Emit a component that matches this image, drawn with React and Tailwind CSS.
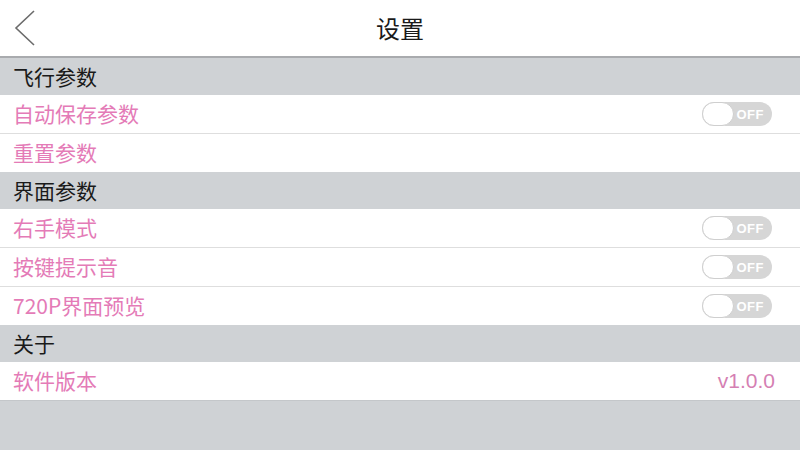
import React from "react";

const font = { fontFamily: '"Noto Sans CJK SC", "Noto Sans", sans-serif' };

function Toggle() {
  return (
    <div className="relative w-[70px] h-[24px] rounded-full bg-[#d6d6d6] flex items-center justify-end pr-[8px]">
      <span className="text-white text-[13px] font-bold leading-none tracking-[0.5px]" style={{ fontFamily: '"Liberation Sans", sans-serif' }}>OFF</span>
      <div className="absolute left-0 top-0 w-[32px] h-[24px] rounded-full bg-white border border-[#cfcfcf]" />
    </div>
  );
}

function Section({ title }) {
  return (
    <div className="h-[37px] bg-[#cfd2d5] flex items-center pl-[13px] text-[21px] text-[#1a1a1a]">
      {title}
    </div>
  );
}

function Row({ label, right, divider }) {
  return (
    <div className={`bg-white flex items-center justify-between pl-[13px] pr-[28px] ${divider ? "h-[39px] border-b border-[#dedede]" : "h-[38px]"}`}>
      <span className="text-[21px] text-[#e47bb7]">{label}</span>
      {right}
    </div>
  );
}

export default function App() {
  return (
    <div className="w-[800px] h-[450px] bg-[#cfd2d5] flex flex-col overflow-hidden" style={font}>
      <div className="h-[58px] bg-white relative flex items-center justify-center border-b-2 border-[#a9abae]">
        <svg className="absolute left-[13px] top-[9px]" width="24" height="38" viewBox="0 0 24 38">
          <path d="M21 2 L3 19 L21 36" fill="none" stroke="#6b6b6b" strokeWidth="1.6" />
        </svg>
        <span className="text-[24px] text-[#1a1a1a]">设置</span>
      </div>
      <Section title="飞行参数" />
      <Row label="自动保存参数" right={<Toggle />} divider />
      <Row label="重置参数" />
      <Section title="界面参数" />
      <Row label="右手模式" right={<Toggle />} divider />
      <Row label="按键提示音" right={<Toggle />} divider />
      <Row label="720P界面预览" right={<Toggle />} />
      <Section title="关于" />
      <Row
        label="软件版本"
        right={<span className="text-[21px] text-[#d57fb3] -mr-[3px]" style={{ fontFamily: '"Liberation Sans", sans-serif' }}>v1.0.0</span>}
      />
      <div className="flex-1 border-t border-[#c4c7ca]" />
    </div>
  );
}
